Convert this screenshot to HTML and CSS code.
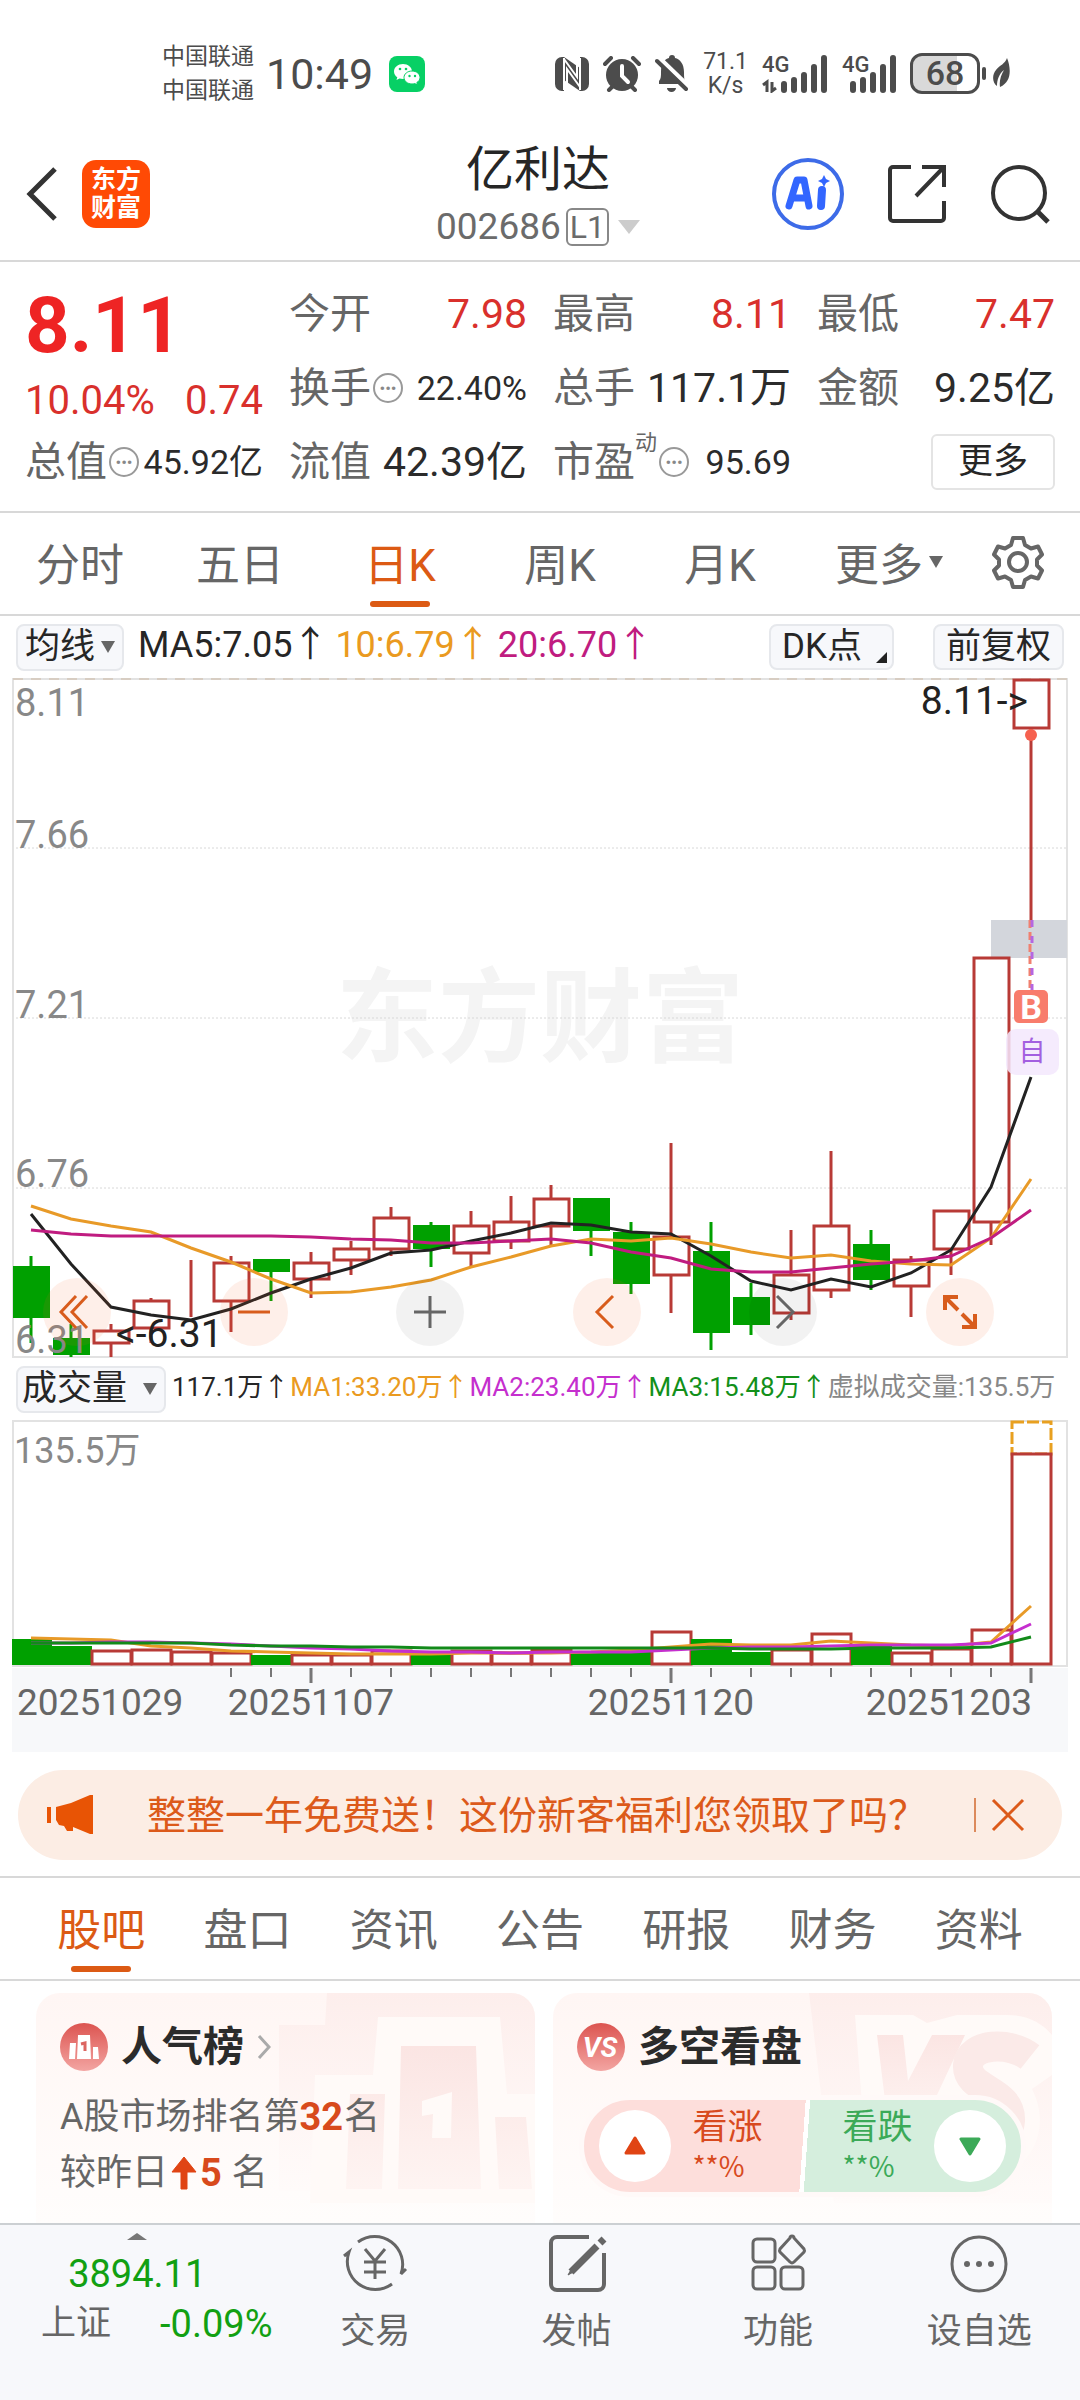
FILE: index.html
```html
<!DOCTYPE html>
<html lang="zh-CN">
<head>
  <meta charset="UTF-8" />
  <meta name="viewport" content="width=device-width, initial-scale=1.0"/>
  <title>亿利达 002686</title>
  <link rel="stylesheet" href="styles.css">
</head>
<body>

<!-- Status bar -->
<div class="status">
  <div class="carriers"><span>中国联通</span><span>中国联通</span></div>
  <span class="clock">10:49</span>
  <svg class="wechat" width="36" height="36" viewBox="0 0 36 36">
    <rect width="36" height="36" rx="8" fill="#07d065"/>
    <path d="M14 8c-5 0-9 3.200-9 7.500 0 2.400 1.300 4.400 3.300 5.800L7.500 24l3-1.500c1 .3 2 .5 3.500.5 5 0 9-3.200 9-7.500S19 8 14 8z" fill="#fff"/>
    <path d="M23 15c-4.500 0-8 2.900-8 6.500s3.500 6.500 8 6.500c1 0 2-.1 2.800-.4l2.700 1.400-.7-2.400c2-1.200 3.200-3 3.200-5.100 0-3.600-3.500-6.500-8-6.500z" fill="#fff" stroke="#07d065" stroke-width="1"/>
    <g fill="#07d065"><circle cx="11" cy="13" r="1.300"/><circle cx="17" cy="13" r="1.300"/><circle cx="20.500" cy="20" r="1.200"/><circle cx="26" cy="20" r="1.200"/></g>
  </svg>
  <div class="status-right">
    <svg width="34" height="34" viewBox="0 0 34 34">
      <path d="M7 0h2v34H7a7 7 0 0 1-7-7V7a7 7 0 0 1 7-7zM25 0h2a7 7 0 0 1 7 7v20a7 7 0 0 1-7 7h-2z" fill="#4c4c4c"/>
      <path d="M9 0l16 11v23L9 23z" fill="#4c4c4c"/>
      <path d="M9 1v32M25 1v32M12 31V12l13 18M9 2l13 18V2" fill="none" stroke="#fff" stroke-width="2"/>
    </svg>
    <svg width="38" height="36" viewBox="0 0 38 36">
      <circle cx="19" cy="19" r="16" fill="#4c4c4c"/>
      <path d="M2 8l6-6M36 8l-6-6M6 34l4-4M32 34l-4-4" stroke="#4c4c4c" stroke-width="4" stroke-linecap="round"/>
      <path d="M19 10v10l6 6" fill="none" stroke="#fff" stroke-width="4" stroke-linecap="round"/>
    </svg>
    <svg width="34" height="38" viewBox="0 0 34 38">
      <path d="M4 29v-3c2-2 2-5 2-9 0-9 4-13 8-14a3 3 0 0 1 6 0c5 1 9 6 9 14 0 5 0 9 2 12z" fill="#4c4c4c"/>
      <path d="M12 33h9a4.500 4 0 0 1-9 0z" fill="#4c4c4c"/>
      <path d="M4 3l31 30" stroke="#fff" stroke-width="5"/>
      <path d="M2 6l29 28" stroke="#4c4c4c" stroke-width="4" stroke-linecap="round"/>
    </svg>
    <div class="speed"><span>71.1</span><span>K/s</span></div>
    <div class="signal">
      <span>4G</span>
      <svg width="66" height="38" viewBox="0 0 66 38" fill="none" stroke="#4c4c4c">
        <path d="M22 29v6M32 25v10M42 20v15M52 12v23M62 3v32" stroke-width="6" stroke-linecap="round"/>
        <path d="M1 30l4-3v10M10 27v9l4-3" stroke-width="3"/>
      </svg>
    </div>
    <div class="signal">
      <span>4G</span>
      <svg width="54" height="38" viewBox="0 0 54 38" fill="none" stroke="#4c4c4c">
        <path d="M11 29v6M21 25v10M31 20v15M41 12v23M51 3v32" stroke-width="6" stroke-linecap="round"/>
      </svg>
    </div>
    <div class="battery">68</div>
    <svg class="leaf" width="28" height="36" viewBox="0 0 28 36">
      <rect x="0" y="11" width="4" height="13" rx="2" fill="#4c4c4c"/>
      <path d="M25 2c4 10 5 24-7 29-1-6 1-12 4-17-5 4-7 10-7 16-5-4-5-11-1-16s9-6 11-12z" fill="#4c4c4c"/>
    </svg>
  </div>
</div>

<!-- Header -->
<header class="header">
  <div class="header-left">
    <button class="icon-btn" aria-label="返回">
      <svg width="32" height="56" viewBox="0 0 32 56"><path d="M29 3L4 28l25 25" fill="none" stroke="#333" stroke-width="5"/></svg>
    </button>
    <a class="logo" href="#"><span>东方</span><span>财富</span></a>
  </div>
  <div class="header-title">
    <h1>亿利达</h1>
    <p class="code">002686 <span class="level">L1</span><i class="tri tri-light"></i></p>
  </div>
  <div class="header-right">
    <button class="icon-btn" aria-label="AI">
      <svg width="72" height="72" viewBox="0 0 72 72">
        <circle cx="36" cy="36" r="34" fill="#fff" stroke="#3d6be8" stroke-width="4"/>
        <path d="M17 48l8-26h7l5 26M20 40h14" fill="none" stroke="#3366ff" stroke-width="7" stroke-linejoin="round" stroke-linecap="round"/>
        <path d="M50 32l-1 16" stroke="#3366ff" stroke-width="8" stroke-linecap="round"/>
        <path d="M52 17l2 4 4 2-4 2-2 4-2-4-4-2 4-2z" fill="#3366ff"/>
      </svg>
    </button>
    <button class="icon-btn" aria-label="分享">
      <svg width="60" height="60" viewBox="0 0 60 60" fill="none" stroke="#333" stroke-width="4">
        <path d="M24 3H6a3 3 0 0 0-3 3v48a3 3 0 0 0 3 3h48a3 3 0 0 0 3-3V37M35 3h22v20M57 3L29 32"/>
      </svg>
    </button>
    <button class="icon-btn" aria-label="搜索">
      <svg width="60" height="60" viewBox="0 0 60 60" fill="none" stroke="#333" stroke-width="4">
        <circle cx="29" cy="29" r="26"/><path d="M48 48l10 10" stroke-width="5"/>
      </svg>
    </button>
  </div>
</header>

<!-- Quote -->
<section class="quote">
  <div class="price">
    <div class="price-now">8.11</div>
    <div class="price-change"><span>10.04%</span><span>0.74</span></div>
  </div>
  <div class="item"><span>今开</span><b class="up">7.98</b></div>
  <div class="item"><span>最高</span><b class="up">8.11</b></div>
  <div class="item"><span>最低</span><b class="up">7.47</b></div>
  <div class="item"><span>换手</span><i class="dots">•••</i><b class="small">22.40%</b></div>
  <div class="item"><span>总手</span><b>117.1万</b></div>
  <div class="item"><span>金额</span><b>9.25亿</b></div>
  <div class="item"><span>总值</span><i class="dots">•••</i><b class="small">45.92亿</b></div>
  <div class="item"><span>流值</span><b>42.39亿</b></div>
  <div class="item"><span>市盈</span><sup>动</sup><i class="dots">•••</i><b class="small">95.69</b></div>
  <div class="item"><button class="more-btn">更多</button></div>
</section>

<!-- Period tabs -->
<nav class="periods">
  <button>分时</button>
  <button>五日</button>
  <button class="active">日K</button>
  <button>周K</button>
  <button>月K</button>
  <button>更多<i class="tri tri-small"></i></button>
  <button aria-label="设置">
    <svg width="52" height="54" viewBox="0 0 52 54" fill="none" stroke="#666" stroke-width="4" stroke-linejoin="round">
      <path d="M21 3h10l2 7 6 3.500 7-2 4 8-5 5v6l5 5-4 8-7-2-6 3.500-2 7H21l-2-7-6-3.500-7 2-4-8 5-5v-6l-5-5 4-8 7 2 6-3.500z"/>
      <circle cx="26" cy="27" r="9"/>
    </svg>
  </button>
</nav>

<!-- K line -->
<div class="ma-row">
  <label class="pick"><select aria-label="主图指标"><option>均线</option></select><i class="tri tri-small"></i></label>
  <span class="ma ma-black">MA5:7.05↑</span>
  <span class="ma ma-orange">10:6.79↑</span>
  <span class="ma ma-pink">20:6.70↑</span>
  <button class="pill pill-dk">DK点<i class="corner"></i></button>
  <button class="pill">前复权</button>
</div>

<div class="kline">
  <svg viewBox="12 678 1056 680">
    <text class="watermark" x="540" y="1054">东方财富</text>
    <path class="grid-line" d="M12 848H1067M12 1018H1067M12 1188H1067"/>
    <rect class="frame" x="13" y="679" width="1054" height="678"/>
    <path class="limit-line" d="M13 679H1067"/>
    <rect x="991" y="920" width="76" height="38" fill="#d3d6dc"/>
    <g id="candles"></g>
    <g class="axis-text">
      <text x="15" y="716">8.11</text>
      <text x="15" y="848">7.66</text>
      <text x="15" y="1018">7.21</text>
      <text x="15" y="1187">6.76</text>
      <text x="15" y="1353">6.31</text>
    </g>
    <g id="maLines"></g>
    <text class="mark-text" x="1028" y="714" text-anchor="end">8.11-&gt;</text>
    <text class="mark-text" x="116" y="1347">&lt;-6.31</text>
    <circle cx="1031" cy="735" r="6" fill="#f6614f"/>
    <path d="M1030 920v90" stroke="#f08070" stroke-width="3" stroke-dasharray="8 4"/>
    <path d="M1032 920v105" stroke="#b566e0" stroke-width="3" stroke-dasharray="7 9"/>
    <rect x="1014" y="990" width="34" height="33" rx="5" fill="#f87c6c"/>
    <text class="buy-text" x="1031" y="1019">B</text>
    <rect x="1006" y="1029" width="53" height="46" rx="10" fill="#f3e8fd" fill-opacity=".85"/>
    <text class="self-text" x="1032" y="1061">自</text>
  </svg>
  <div class="chart-tools">
    <button aria-label="最左"><svg viewBox="0 0 68 68"><path d="M33 18L18 34l15 16M44 18L29 34l15 16"/></svg></button>
    <button aria-label="缩小"><svg viewBox="0 0 68 68"><path d="M18 34h32"/></svg></button>
    <button class="gray" aria-label="放大"><svg viewBox="0 0 68 68"><path d="M18 34h32M34 18v32"/></svg></button>
    <button aria-label="左移"><svg viewBox="0 0 68 68"><path d="M40 18L24 34l16 16"/></svg></button>
    <button class="gray" aria-label="右移"><svg viewBox="0 0 68 68"><path d="M28 18l16 16-16 16"/></svg></button>
    <button aria-label="全屏"><svg viewBox="0 0 68 68"><path class="bold" d="M19 32V19h13M20 20l12 12M49 36v13H36M48 48L36 36"/></svg></button>
  </div>
</div>

<!-- Volume -->
<div class="vol-row">
  <label class="pick pick-wide"><select aria-label="副图指标"><option>成交量</option></select><i class="tri tri-small"></i></label>
  <span>117.1万↑</span>
  <span class="ma-orange">MA1:33.20万↑</span>
  <span class="ma-purple">MA2:23.40万↑</span>
  <span class="ma-green">MA3:15.48万↑</span>
  <span class="ma-gray">虚拟成交量:135.5万</span>
</div>

<div class="volume">
  <svg viewBox="12 1420 1056 332">
    <rect x="12" y="1668" width="1056" height="84" fill="#f7f8fa"/>
    <rect class="frame" x="13" y="1421" width="1054" height="245"/>
    <text class="axis-text vol-text" x="14" y="1463">135.5万</text>
    <rect x="1012" y="1422" width="39" height="32" fill="#fff" stroke="#e8a020" stroke-width="3" stroke-dasharray="12 3"/>
    <g id="bars"></g>
    <g id="volLines"></g>
    <g id="ticks"></g>
    <g class="date-text">
      <text x="17" y="1715">20251029</text>
      <text x="311" y="1715" text-anchor="middle">20251107</text>
      <text x="671" y="1715" text-anchor="middle">20251120</text>
      <text x="1032" y="1715" text-anchor="end">20251203</text>
    </g>
  </svg>
</div>

<!-- Promo banner -->
<div class="banner">
  <svg width="48" height="42" viewBox="0 0 48 42" fill="#e85405">
    <path d="M0 13h4v16H0zM9 13l15-4L43 1h3v39h-3l-17-7v4h-6l-3-5-5-1-3-5z"/>
  </svg>
  <a href="#">整整一年免费送！这份新客福利您领取了吗？</a>
  <button aria-label="关闭">
    <svg width="34" height="34" viewBox="0 0 34 34"><path d="M2 2l30 30M32 2L2 32" stroke="#dc5a1a" stroke-width="3"/></svg>
  </button>
</div>

<!-- Content tabs -->
<nav class="tabs">
  <button class="active">股吧</button>
  <button>盘口</button>
  <button>资讯</button>
  <button>公告</button>
  <button>研报</button>
  <button>财务</button>
  <button>资料</button>
</nav>

<section class="cards">
  <div class="card">
    <svg class="card-bg" width="300" height="210" viewBox="0 0 300 210">
      <defs>
        <linearGradient id="fade" x1="0" y1="0" x2="0" y2="1"><stop offset="0" stop-color="#fdeeec"/><stop offset="1" stop-color="#fffbfa"/></linearGradient>
        <linearGradient id="fadeDark" x1="0" y1="0" x2="0" y2="1"><stop offset="0" stop-color="#fbe5e3"/><stop offset="1" stop-color="#fef4f2"/></linearGradient>
      </defs>
      <path d="M92 0h208v198H44V32h46z" fill="url(#fade)"/>
      <path d="M143 24h122l7 77h28v109H75l5-128h58z" fill="#fffaf8"/>
      <path d="M115 101h35l-3 95h-36zM166 53h75l5 143h-83zM260 124h31l6 72h-33z" fill="url(#fadeDark)"/>
      <path d="M187 108l30-9-1 46h-19l1-24-11 2z" fill="#fffaf8"/>
    </svg>
    <h2>
      <svg width="48" height="48" viewBox="0 0 48 48">
        <defs><linearGradient id="badge" x1="0" y1="0" x2="0" y2="1"><stop offset="0" stop-color="#dc5450"/><stop offset="1" stop-color="#f3a5a2"/></linearGradient></defs>
        <circle cx="24" cy="24" r="24" fill="url(#badge)"/>
        <path d="M10 20h6l-1 16H9zM18 12h12l1 24H17zM33 24h5l1 12h-6z" fill="#fff"/>
        <path d="M21 21l4-1v8" fill="none" stroke="#dc6561" stroke-width="3"/>
      </svg>
      人气榜
      <svg width="14" height="24" viewBox="0 0 14 24"><path d="M2 1l10 11L2 23" fill="none" stroke="#aaa" stroke-width="3"/></svg>
    </h2>
    <p>A股市场排名第<b>32</b>名</p>
    <p>较昨日<svg width="32" height="36" viewBox="0 0 32 36"><path d="M16 2l12 15h-9v17h-6V17H4z" fill="#e04414" stroke="#e04414" stroke-linejoin="round"/></svg><b>5</b>&nbsp;名</p>
  </div>

  <div class="card">
    <svg class="card-bg" width="250" height="210" viewBox="0 0 250 210">
      <path d="M7 0h243v210H32z" fill="url(#fade)"/>
      <path d="M53 22h58l14 8 30-8h50c20 0 35 8 45 20v40l-20 14c20 40 0 80-40 90H66z" fill="#fffaf8"/>
      <path d="M75 42h26l5 46 24-46h33l-42 90H86z" fill="url(#fadeDark)"/>
      <path d="M228 64C208 48 168 50 166 72c-2 26 44 24 42 56-2 24-30 26-54 14" fill="none" stroke="#fbeae8" stroke-width="30"/>
    </svg>
    <h2>
      <svg width="48" height="48" viewBox="0 0 48 48">
        <circle cx="24" cy="24" r="24" fill="url(#badge)"/>
        <text class="vs" x="23" y="34">VS</text>
      </svg>
      多空看盘
    </h2>
    <div class="vote">
      <button class="vote-up">
        <i><svg width="24" height="20" viewBox="0 0 24 20"><path d="M12 2l9 15H3z" fill="#e04414" stroke="#e04414" stroke-width="3" stroke-linejoin="round"/></svg></i>
        <span>看涨<small>**%</small></span>
      </button>
      <button class="vote-down">
        <span>看跌<small>**%</small></span>
        <i><svg width="24" height="20" viewBox="0 0 24 20"><path d="M12 18L3 3h18z" fill="#3caa58" stroke="#3caa58" stroke-width="3" stroke-linejoin="round"/></svg></i>
      </button>
    </div>
  </div>
</section>

<!-- Bottom bar -->
<nav class="bottom">
  <a class="index" href="#">
    <i class="tri-up"></i>
    <span class="index-value">3894.11</span>
    <span class="index-row"><span>上证</span><b>-0.09%</b></span>
  </a>
  <a href="#">
    <svg width="68" height="60" viewBox="0 0 68 60" fill="none" stroke="#666" stroke-width="3">
      <path d="M17 9a28 28 0 0 1 43 32l5-5M51 51A28 28 0 0 1 8 19l-5 4M24 16l10 12 10-12M23 29h22M23 39h22M34 28v18"/>
    </svg>
    交易
  </a>
  <a href="#">
    <svg width="60" height="60" viewBox="0 0 60 60" fill="none" stroke="#666" stroke-width="4">
      <path d="M42 4H10a6 6 0 0 0-6 6v41a6 6 0 0 0 6 6h41a6 6 0 0 0 6-6V20"/>
      <path d="M50 13L24 39M53 10l4-4" stroke-width="7"/><path d="M26 33l-5 9 9-5z" stroke-width="1" fill="#666"/>
    </svg>
    发帖
  </a>
  <a href="#">
    <svg width="60" height="60" viewBox="0 0 60 60" fill="none" stroke="#666" stroke-width="3">
      <rect x="5" y="6" width="22" height="23" rx="4"/><rect x="5" y="34" width="22" height="22" rx="4"/><rect x="33" y="34" width="22" height="22" rx="4"/>
      <path d="M42 5a2 2 0 0 1 4 0l10 11a3 3 0 0 1 0 3L46 29a3 3 0 0 1-4 0L32 19a3 3 0 0 1 0-3z"/>
    </svg>
    功能
  </a>
  <a href="#">
    <svg width="60" height="60" viewBox="0 0 60 60">
      <circle cx="30" cy="31" r="27" fill="none" stroke="#666" stroke-width="3"/>
      <g fill="#666"><circle cx="18" cy="31" r="3"/><circle cx="30" cy="31" r="3"/><circle cx="42" cy="31" r="3"/></g>
    </svg>
    设自选
  </a>
</nav>

<script src="script.js"></script>
</body>
</html>
```
FILE: styles.css
```css
* {
  box-sizing: border-box;
}

body {
  margin: 0;
  min-height: 100vh;
  display: flex;
  flex-direction: column;
  background: #fff;
  color: #262626;
  font-family: Roboto, "Noto Sans CJK SC", sans-serif;
  font-size: 36px;
}

button,
select {
  margin: 0;
  padding: 0;
  border: none;
  background: none;
  font: inherit;
  color: inherit;
  cursor: pointer;
}

a {
  color: inherit;
  text-decoration: none;
}

h1,
h2,
p {
  margin: 0;
}

i {
  font-style: normal;
}

svg {
  display: block;
  flex-shrink: 0;
}

/* Status bar */
.status {
  display: flex;
  align-items: center;
  height: 125px;
  padding: 22px 70px 0 162px;
  color: #4c4c4c;
}

.carriers {
  display: flex;
  flex-direction: column;
  font-size: 23px;
  line-height: 34px;
}

.clock {
  margin-left: 12px;
  font-size: 43px;
}

.wechat {
  margin-left: 16px;
}

.status-right {
  display: flex;
  align-items: center;
  gap: 14px;
  margin-left: auto;
}

.speed {
  display: flex;
  flex-direction: column;
  align-items: center;
  font-size: 23px;
  line-height: 24px;
}

.signal {
  position: relative;
}

.signal span {
  position: absolute;
  left: 0;
  top: 0;
  font-size: 22px;
  line-height: 20px;
  font-weight: 500;
}

.battery {
  width: 70px;
  height: 41px;
  border: 3px solid #4c4c4c;
  border-radius: 12px;
  background: linear-gradient(to right, #d9d9d9 68%, #fff 68%);
  font-size: 34px;
  line-height: 35px;
  font-weight: 500;
  text-align: center;
}

.leaf {
  margin-left: -12px;
}

/* Header */
.header {
  display: grid;
  grid-template-columns: 1fr auto 1fr;
  align-items: center;
  padding: 14px 30px 7px 26px;
  border-bottom: 2px solid #d8d8d8;
}

.header-left,
.header-right {
  display: flex;
  align-items: center;
  padding-bottom: 4px;
}

.header-left {
  gap: 24px;
}

.header-right {
  justify-content: flex-end;
  gap: 43px;
}

.logo {
  display: flex;
  flex-direction: column;
  justify-content: center;
  width: 68px;
  height: 68px;
  border-radius: 14px;
  background: #ff4a05;
  color: #fff;
  font-size: 25px;
  line-height: 28px;
  font-weight: 700;
  text-align: center;
}

.header-title {
  text-align: center;
}

.header-title h1 {
  font-size: 48px;
  line-height: 62px;
  font-weight: 400;
}

.code {
  display: flex;
  align-items: center;
  justify-content: center;
  gap: 5px;
  line-height: 52px;
  font-size: 37px;
  color: #6b6b6b;
}

.level {
  padding: 0 2px;
  border: 2px solid #888;
  border-radius: 6px;
  font-size: 32px;
  line-height: 34px;
}

.tri {
  border: 8px solid transparent;
  border-top: 13px solid #666;
  border-bottom: 0;
}

.tri-light {
  margin-left: 4px;
  border-width: 14px 11px 0;
  border-top-color: #ccc;
}

/* Quote */
.quote {
  display: grid;
  grid-template-columns: repeat(4, 1fr);
  grid-auto-rows: 74px;
  column-gap: 26px;
  padding: 15px 25px 12px;
  border-bottom: 2px solid #d8d8d8;
}

.price {
  grid-row: span 2;
  color: #ee2424;
}

.price-now {
  font-size: 78px;
  line-height: 98px;
  font-weight: 700;
}

.price-change {
  display: flex;
  justify-content: space-between;
  font-size: 40px;
  line-height: 52px;
  color: #d9302c;
}

.item {
  display: flex;
  align-items: center;
  font-size: 41px;
  line-height: 74px;
  color: #666;
  white-space: nowrap;
}

.item b {
  margin-left: auto;
  font-weight: 400;
  color: #2b2b2b;
}

.item b.up {
  color: #d9302c;
}

.item b.small {
  font-size: 34px;
}

.item sup {
  align-self: flex-start;
  font-size: 22px;
  line-height: 36px;
}

.dots {
  width: 30px;
  height: 30px;
  margin-left: 2px;
  border: 2px solid #999;
  border-radius: 50%;
  font-size: 17px;
  line-height: 26px;
  text-align: center;
  color: #888;
}

.more-btn {
  width: 124px;
  height: 56px;
  margin-left: auto;
  border: 2px solid #e4e4e4;
  border-radius: 6px;
  font-size: 35px;
  line-height: 50px;
  color: #262626;
}

/* Period tabs */
.periods {
  display: grid;
  grid-template-columns: repeat(5, 160fr) 178fr 80fr;
  height: 103px;
  padding-right: 22px;
  border-bottom: 2px solid #d8d8d8;
  font-size: 44px;
  color: #666;
}

.periods button,
.tabs button {
  position: relative;
  display: flex;
  align-items: center;
  justify-content: center;
  padding-bottom: 4px;
  white-space: nowrap;
}

.periods .tri {
  margin-left: 6px;
}

.active {
  color: #dc5a14;
}

.active::after {
  content: "";
  position: absolute;
  left: 50%;
  bottom: 7px;
  width: 60px;
  height: 6px;
  margin-left: -30px;
  border-radius: 3px;
  background: #dc5a14;
}

/* Indicator rows */
.ma-row,
.vol-row {
  display: flex;
  align-items: center;
  height: 62px;
  padding: 0 16px;
  line-height: 40px;
  white-space: nowrap;
}

.ma-row {
  font-size: 36px;
}

.vol-row {
  gap: 1px;
  font-size: 26px;
}

.ma-row > span,
.vol-row > span {
  padding-bottom: 4px;
}

.vol-row .pick {
  margin-right: 5px;
}

.pick {
  display: flex;
  align-items: center;
  justify-content: space-between;
  width: 108px;
  height: 47px;
  padding: 0 7px 0 7px;
  border: 2px solid #e6e8ec;
  border-radius: 8px;
  background: #f7f8fb;
}

.pick-wide {
  width: 150px;
  padding-left: 4px;
}

.pick select {
  appearance: none;
  font-size: 35px;
  line-height: 42px;
}

.tri-small {
  border-width: 12px 7px 0;
}

.ma {
  margin-left: 14px;
}

.ma + .ma {
  margin-left: 7px;
}

.ma-orange { color: #ea9a20; }
.ma-pink { color: #c01c80; }
.ma-purple { color: #c52fce; }
.ma-green { color: #12901a; }
.ma-gray { color: #888; }

.pill {
  position: relative;
  height: 46px;
  padding: 0 11px;
  border: 2px solid #e6e8ec;
  border-radius: 8px;
  background: #f7f8fb;
  font-size: 35px;
  line-height: 38px;
}

.pill-dk {
  margin-left: auto;
  margin-right: 39px;
  padding-right: 30px;
}

.corner {
  position: absolute;
  right: 5px;
  bottom: 5px;
  border-left: 11px solid transparent;
  border-bottom: 11px solid #222;
}

/* Charts */
.kline,
.volume {
  position: relative;
  padding: 0 12px;
}

.kline > svg,
.volume > svg {
  width: 100%;
}

.frame {
  fill: none;
  stroke: #e2e2e2;
  stroke-width: 2;
}

.grid-line {
  stroke: #d8d8d8;
  stroke-width: 1;
  stroke-dasharray: 2 2;
}

.limit-line {
  stroke: #cdb8a2;
  stroke-width: 1;
  stroke-dasharray: 10 8;
}

.watermark {
  font-size: 102px;
  font-weight: 700;
  text-anchor: middle;
  fill: #f4f4f4;
}

.axis-text {
  font-size: 38px;
  fill: #888;
}

.vol-text {
  font-size: 36px;
}

.mark-text {
  font-size: 39px;
  fill: #222;
}

.date-text {
  font-size: 37px;
  fill: #666;
}

.buy-text {
  font-size: 34px;
  font-weight: 700;
  text-anchor: middle;
  fill: #fff;
}

.self-text {
  font-size: 27px;
  text-anchor: middle;
  fill: #a35fe0;
}

.chart-tools {
  position: absolute;
  left: 4%;
  right: 8%;
  bottom: 12px;
  display: flex;
  justify-content: space-between;
}

.chart-tools button {
  width: 68px;
  height: 68px;
  border-radius: 50%;
  background: rgba(250, 100, 40, 0.1);
}

.chart-tools path {
  fill: none;
  stroke: #d85c1c;
  stroke-width: 3;
}

.chart-tools .bold {
  stroke-width: 4;
}

.chart-tools .gray {
  background: rgba(0, 0, 0, 0.05);
}

.chart-tools .gray path {
  stroke: #666;
}

/* Banner */
.banner {
  display: flex;
  align-items: center;
  height: 90px;
  margin: 18px 18px 16px;
  padding: 0 37px 0 29px;
  border-radius: 45px;
  background: #fcede4;
  color: #dc5a1a;
}

.banner a {
  flex: 1;
  margin-left: 52px;
  padding-bottom: 6px;
  font-size: 39px;
}

.banner button {
  padding-left: 15px;
  border-left: 2px solid #dc8a5c;
}

/* Content tabs */
.tabs {
  display: grid;
  grid-template-columns: repeat(7, 1fr);
  height: 105px;
  padding: 0 28px;
  border-top: 2px solid #d8d8d8;
  border-bottom: 2px solid #d8d8d8;
  font-size: 44px;
  color: #666;
}

/* Cards */
.cards {
  flex: 1;
  display: grid;
  grid-template-columns: 1fr 1fr;
  gap: 18px;
  padding: 12px 28px 0 36px;
}

.card {
  position: relative;
  overflow: hidden;
  padding: 24px 24px 18px;
  border-radius: 24px 24px 0 0;
  background: linear-gradient(#fff6f4, #fffdfc);
  color: #666;
}

.card-bg {
  position: absolute;
  right: 0;
  top: 0;
}

.card h2 {
  position: relative;
  display: flex;
  align-items: center;
  gap: 13px;
  margin-bottom: 12px;
  font-size: 41px;
  line-height: 60px;
  color: #2b2b2b;
}

.card p {
  position: relative;
  display: flex;
  align-items: center;
  font-size: 36px;
  line-height: 56px;
}

.card p b {
  margin-right: 1px;
  font-size: 38px;
  color: #d84a1c;
}

.vs {
  font-size: 28px;
  font-weight: 700;
  font-style: italic;
  text-anchor: middle;
  fill: #fff;
}

.vote {
  position: relative;
  display: flex;
  height: 102px;
  margin: 18px 2px 0;
  border: 5px solid #fff9f8;
  border-radius: 51px;
  background: linear-gradient(94deg, #fddedb 50%, #fff 50%, #fff 51%, #d5eedd 51%);
  overflow: hidden;
}

.vote button {
  flex: 1;
  display: flex;
  align-items: center;
  justify-content: space-between;
}

.vote-up {
  padding: 0 38px 0 15px;
  color: #d84a20;
}

.vote-down {
  padding: 0 15px 0 42px;
  color: #3caa58;
}

.vote i {
  display: flex;
  align-items: center;
  justify-content: center;
  width: 72px;
  height: 72px;
  border-radius: 50%;
  background: #fff;
}

.vote span {
  font-size: 35px;
  line-height: 38px;
  text-align: left;
}

.vote small {
  display: block;
  font-family: "Noto Sans CJK SC", sans-serif;
  font-size: 28px;
  line-height: 36px;
}

/* Bottom bar */
.bottom {
  display: grid;
  grid-template-columns: 274fr repeat(4, 201fr);
  height: 177px;
  padding-top: 8px;
  border-top: 2px solid #ccd0d3;
  background: #f7f8fb;
  font-size: 35px;
  line-height: 50px;
  color: #666;
}

.bottom a {
  display: flex;
  flex-direction: column;
  align-items: center;
  gap: 14px;
}

.bottom .index {
  gap: 0;
}

.tri-up {
  border: 10px solid transparent;
  border-top: 0;
  border-bottom: 7px solid #777;
}

.index-value {
  margin-top: 9px;
  font-size: 38px;
  color: #12a012;
}

.index-row {
  display: flex;
  align-self: stretch;
  justify-content: space-between;
  padding: 0 2px 0 41px;
}

.index-row b {
  font-size: 38px;
  font-weight: 400;
  color: #12a012;
}
```
FILE: script.js
```js
const STEP = 40;
const FIRST = 31;
const RED = '#b83a36';
const GREEN = '#00a000';

// [up, high, top, bottom, low, volume top]
const days = [
  [0, 1256, 1267, 1317, 1343, 1640],
  [0, 1324, 1339, 1354, 1357, 1647],
  [1, 1324, 1331, 1343, 1357, 1651],
  [1, 1298, 1301, 1328, 1343, 1650],
  [1, 1260, 1298, 1298, 1317, 1652],
  [1, 1256, 1263, 1301, 1332, 1653],
  [0, 1260, 1260, 1271, 1301, 1656],
  [1, 1252, 1263, 1279, 1298, 1655],
  [1, 1241, 1249, 1260, 1275, 1655],
  [1, 1207, 1218, 1249, 1256, 1651],
  [0, 1222, 1226, 1248, 1267, 1655],
  [1, 1211, 1226, 1253, 1267, 1651],
  [1, 1196, 1222, 1241, 1249, 1653],
  [1, 1185, 1199, 1226, 1245, 1650],
  [0, 1199, 1199, 1230, 1256, 1653],
  [0, 1222, 1233, 1283, 1294, 1653],
  [1, 1143, 1237, 1275, 1313, 1632],
  [0, 1222, 1252, 1332, 1350, 1640],
  [0, 1283, 1298, 1324, 1335, 1653],
  [1, 1230, 1275, 1313, 1320, 1650],
  [1, 1151, 1226, 1290, 1298, 1634],
  [0, 1230, 1245, 1279, 1290, 1647],
  [1, 1256, 1260, 1286, 1317, 1653],
  [1, 1211, 1211, 1249, 1275, 1649],
  [1, 958, 958, 1222, 1245, 1630],
  [1, 680, 680, 728, 920, 1454]
];

const maLines = {
  '#222': [1214, 1264, 1307, 1315, 1320, 1309, 1293, 1279, 1268, 1253, 1250, 1241, 1233, 1223, 1225, 1232, 1234, 1256, 1281, 1290, 1279, 1287, 1273, 1250, 1187, 1077],
  '#e89a28': [1206, 1219, 1226, 1232, 1248, 1262, 1279, 1293, 1292, 1287, 1280, 1267, 1257, 1246, 1239, 1241, 1238, 1244, 1252, 1258, 1255, 1261, 1264, 1265, 1238, 1179],
  '#c01c80': [1230, 1234, 1236, 1236, 1236, 1236, 1236, 1237, 1239, 1240, 1243, 1243, 1241, 1239, 1243, 1252, 1258, 1269, 1272, 1272, 1268, 1264, 1261, 1256, 1238, 1210]
};

const volLines = {
  '#e89a28': [1638, 1639, 1640, 1646, 1648, 1651, 1652, 1653, 1654, 1654, 1654, 1653, 1653, 1653, 1652, 1650, 1647, 1644, 1645, 1645, 1641, 1643, 1645, 1646, 1642, 1606],
  '#c52fce': [1643, 1643, 1642, 1642, 1643, 1644, 1646, 1648, 1649, 1651, 1652, 1652, 1653, 1652, 1652, 1652, 1650, 1648, 1647, 1647, 1646, 1645, 1645, 1645, 1643, 1624],
  '#128a1a': [1643, 1643, 1643, 1643, 1643, 1645, 1646, 1646, 1647, 1647, 1648, 1648, 1648, 1648, 1648, 1648, 1648, 1648, 1649, 1649, 1649, 1648, 1648, 1648, 1647, 1637]
};

function centerX(i) {
  return FIRST + STEP * i;
}

function drawLines(id, lines) {
  document.getElementById(id).innerHTML = Object.entries(lines).map(([color, ys]) => {
    const points = ys.map((y, i) => centerX(i) + ',' + y).join(' ');
    return `<polyline points="${points}" fill="none" stroke="${color}" stroke-width="3"/>`;
  }).join('');
}

let candles = '';
let bars = '';
let ticks = '';

days.forEach(([up, high, top, bottom, low, vol], i) => {
  const x = centerX(i);
  const color = up ? RED : GREEN;
  const fill = up ? 'none' : GREEN;
  const line = up ? 3 : 2;
  candles += `<path d="M${x} ${high}V${top}M${x} ${bottom}V${low}" stroke="${color}" stroke-width="3"/>`;
  candles += `<rect x="${x - 17}" y="${top}" width="35" height="${bottom - top}" fill="${fill}" stroke="${color}" stroke-width="${bottom > top ? line : 1}"/>`;
  bars += `<rect x="${x - 19}" y="${vol}" width="39" height="${1664 - vol}" fill="${up ? '#fff' : GREEN}" stroke="${color}" stroke-width="${line}"/>`;

  if (i > 4) {
    const major = (i - 7) % 9 === 0;
    ticks += `<path d="M${x} 1668v${major ? 15 : 9}" stroke="#777" stroke-width="${major ? 3 : 2}"/>`;
  }
});

document.getElementById('candles').innerHTML = candles;
document.getElementById('bars').innerHTML = bars;
document.getElementById('ticks').innerHTML = ticks;
drawLines('maLines', maLines);
drawLines('volLines', volLines);
```
